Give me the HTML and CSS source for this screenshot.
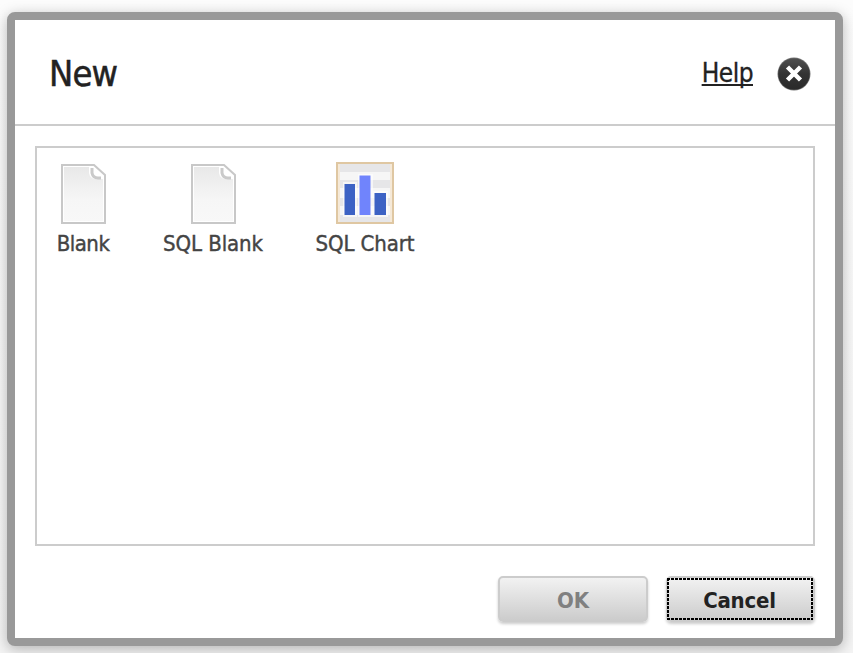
FILE: index.html
```
<!DOCTYPE html>
<html lang="en">
<head>
<meta charset="utf-8">
<title>New</title>
<link rel="stylesheet" href="styles.css">
</head>
<body>
<svg class="defs" width="0" height="0" aria-hidden="true">
  <defs>
    <linearGradient id="paper" x1="0" y1="0" x2="0" y2="1"><stop offset="0" stop-color="#e8e8e8"/><stop offset=".6" stop-color="#f6f6f6"/><stop offset="1" stop-color="#f8f8f8"/></linearGradient>
    <linearGradient id="disc" x1="0" y1="0" x2="0" y2="1"><stop offset="0" stop-color="#505050"/><stop offset=".5" stop-color="#333"/><stop offset="1" stop-color="#2a2a2a"/></linearGradient>
    <symbol id="page" viewBox="0 0 46 62">
      <path d="M2 3H34L45 13V61H2Z" fill="#fff" stroke="#c8c8c8" stroke-width="2"/>
      <path d="M4 5H29V11Q30 17 36 17H43V59H4Z" fill="url(#paper)"/>
      <path d="M32 6V11Q33 16 38 16H41" fill="none" stroke="#cacaca" stroke-width="3"/>
      <path d="M34 5L42 13H37Q34 12 34 8Z" fill="#fff"/>
    </symbol>
  </defs>
</svg>
<main class="dialog">
  <header class="header">
    <h1 class="title">New</h1>
    <a class="help">Help</a>
    <svg class="close" viewBox="0 0 34 34">
      <circle cx="17" cy="17" r="16.500" fill="#777"/>
      <circle cx="17" cy="17" r="15.800" fill="url(#disc)"/>
      <path d="M10.500 10L23.500 23M23.500 10L10.500 23" stroke="#fff" stroke-width="4.500"/>
    </svg>
  </header>
  <section class="panel">
    <div class="item blank"><svg class="icon"><use href="#page"/></svg><span>Blank</span></div>
    <div class="item sql-blank"><svg class="icon"><use href="#page"/></svg><span>SQL Blank</span></div>
    <div class="item sql-chart">
      <svg class="icon chart" viewBox="0 0 58 62">
        <rect x="1" y="1" width="56" height="60" fill="#f6f6f6" stroke="#dfc7a2" stroke-width="2"/>
        <path d="M3 2H55V10H3ZM3 18H55V26H3ZM3 36H55V44H3ZM3 53H55V60H3Z" fill="#e6e6e8"/>
        <path d="M3 2V60M55 2V60" stroke="#f5e9d8" stroke-width="2"/>
        <path d="M7 20H21V55H7ZM22 12H37V55H22ZM37 29H52V55H37Z" fill="#fff" opacity=".6"/>
        <path d="M8.500 22H19V53H8.500ZM38.500 31H50V53H38.500Z" fill="#3c62c4"/>
        <path d="M23.500 13.500H34.500V53H23.500Z" fill="#7084fc"/>
      </svg>
      <span>SQL Chart</span>
    </div>
  </section>
  <footer class="footer">
    <button class="button ok" disabled>OK</button>
    <button class="button cancel">Cancel</button>
  </footer>
</main>
</body>
</html>
```
FILE: styles.css
```
* { box-sizing: border-box; }
html { background: #fbfbfb; }
body {
  margin: 0;
  height: 653px;
  padding: 12px 10px 7px 7px;
  overflow: hidden;
  background: linear-gradient(#fcfcfc, #f4f4f4);
  font-family: "DejaVu Sans Condensed", "DejaVu Sans", sans-serif;
  font-stretch: condensed;
  color: #222;
}
.defs { position: absolute; }
.dialog {
  height: 634px;
  border: 8px solid #999;
  border-radius: 8px;
  background: linear-gradient(#fff, #fff) padding-box, #999;
  box-shadow: 0 3px 14px rgba(0, 0, 0, .27);
}
.header {
  display: flex;
  align-items: center;
  height: 106px;
  padding: 2px 24px 0 34px;
  border-bottom: 2px solid #ccc;
}
.title {
  margin: 2px auto 0 0;
  font-size: 36px;
  font-weight: 400;
  line-height: 42px;
  letter-spacing: -.8px;
  -webkit-text-stroke: .5px #222;
}
.help {
  font-size: 26px;
  line-height: 32px;
  letter-spacing: -.5px;
  text-decoration: underline;
  text-decoration-thickness: 2px;
  text-underline-offset: 2px;
  text-decoration-skip-ink: none;
  -webkit-text-stroke: .3px #222;
}
.close { width: 34px; height: 34px; margin: 2px 0 0 24px; }
.panel {
  display: flex;
  align-items: flex-start;
  height: 400px;
  margin: 20px;
  padding: 14px 0 0 19px;
  border: 2px solid #ccc;
}
.item {
  display: flex;
  flex-direction: column;
  align-items: center;
  color: #444;
  font-size: 22px;
  line-height: 30px;
  letter-spacing: -.1px;
  white-space: nowrap;
  -webkit-text-stroke: .4px #444;
}
.item svg { -webkit-text-stroke: 0; }
.blank { width: 54px; letter-spacing: -.5px; }
.sql-blank { width: 100px; margin-left: 53px; }
.sql-chart { width: 100px; margin-left: 52px; }
.icon { width: 46px; height: 62px; margin-bottom: 5px; }
.chart { width: 58px; }
.footer {
  display: flex;
  justify-content: flex-end;
  gap: 18px;
  margin-top: 30px;
  padding-right: 20px;
}
.button {
  width: 150px;
  height: 46px;
  padding: 3px 0 0;
  border: 2px solid #ccc;
  border-radius: 5px;
  background: linear-gradient(#f2f2f2, #ccc);
  box-shadow: 0 2px 3px rgba(0, 0, 0, .2);
  font: bold 22px/40px "DejaVu Sans Condensed", "DejaVu Sans", sans-serif;
  font-stretch: condensed;
  letter-spacing: -.2px;
  color: #222;
}
.ok { color: #808080; }
.cancel {
  position: relative;
  width: 149px;
  padding-right: 2px;
}
.cancel::after {
  content: "";
  position: absolute;
  inset: 0 0 0 -1px;
  background:
    repeating-linear-gradient(90deg, #000 0 3px, transparent 3px 4px) 0 0 / 100% 2px no-repeat,
    repeating-linear-gradient(90deg, #000 0 3px, transparent 3px 4px) 0 100% / 100% 2px no-repeat,
    repeating-linear-gradient(#000 0 3px, transparent 3px 4px) 0 0 / 2px 100% no-repeat,
    repeating-linear-gradient(#000 0 3px, transparent 3px 4px) 100% 0 / 2px 100% no-repeat;
}
```
